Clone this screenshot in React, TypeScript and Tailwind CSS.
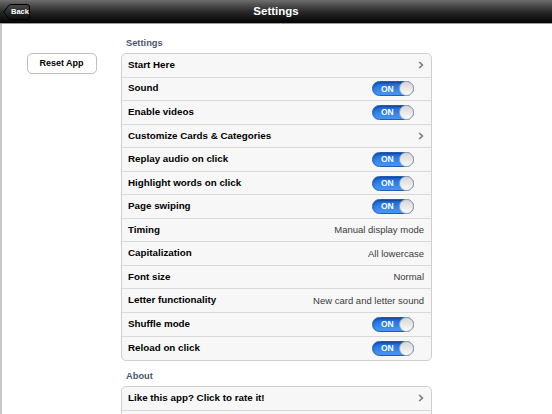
import React from 'react';

type Row =
  | { label: string; kind: 'link' }
  | { label: string; kind: 'toggle' }
  | { label: string; kind: 'value'; value: string };

const settingsRows: Row[] = [
  { label: 'Start Here', kind: 'link' },
  { label: 'Sound', kind: 'toggle' },
  { label: 'Enable videos', kind: 'toggle' },
  { label: 'Customize Cards & Categories', kind: 'link' },
  { label: 'Replay audio on click', kind: 'toggle' },
  { label: 'Highlight words on click', kind: 'toggle' },
  { label: 'Page swiping', kind: 'toggle' },
  { label: 'Timing', kind: 'value', value: 'Manual display mode' },
  { label: 'Capitalization', kind: 'value', value: 'All lowercase' },
  { label: 'Font size', kind: 'value', value: 'Normal' },
  { label: 'Letter functionality', kind: 'value', value: 'New card and letter sound' },
  { label: 'Shuffle mode', kind: 'toggle' },
  { label: 'Reload on click', kind: 'toggle' },
];

// second row sits below the fold; only its top edge shows
const aboutRows: Row[] = [
  { label: 'Like this app? Click to rate it!', kind: 'link' },
  { label: '', kind: 'link' },
];

function Chevron() {
  return (
    <svg width="6" height="8" viewBox="0 0 6 8" className="mr-[1px]">
      <path d="M1.2 1 L4.4 4 L1.2 7" fill="none" stroke="#7a7a7a" strokeWidth="1.6" />
    </svg>
  );
}

function Toggle() {
  return (
    <div className="relative mr-[11px] flex h-[15px] w-[42px] items-center rounded-full border border-[#1d5fb8] bg-gradient-to-b from-[#1b63d4] via-[#2f80ec] to-[#4b97f5] shadow-[inset_0_1px_2px_rgba(0,0,0,0.35)]">
      <span className="ml-[8px] text-[8.5px] font-bold leading-none text-white">ON</span>
      <div className="absolute right-[-1px] top-[-1px] h-[15px] w-[15px] rounded-full border border-[#a9a9a9] bg-gradient-to-b from-[#d6d6d6] to-[#fbfbfb]" />
    </div>
  );
}

function TableRow({ row }: { row: Row }) {
  return (
    <div className="flex h-[23.55px] items-center justify-between border-b border-[#d8d8d8] px-[6px] last:border-b-0">
      <span className="text-[9.8px] font-bold text-black">{row.label}</span>
      {row.kind === 'link' && row.label && <Chevron />}
      {row.kind === 'toggle' && <Toggle />}
      {row.kind === 'value' && <span className="pr-[1px] text-[9.5px] text-[#3a3a3a]">{row.value}</span>}
    </div>
  );
}

function Group({ title, rows }: { title: string; rows: Row[] }) {
  return (
    <div>
      <div className="px-[5px] pb-[4px] text-[9.3px] font-bold leading-[12px] text-[#4c566c]">{title}</div>
      <div className="overflow-hidden rounded-[5px] border border-[#cfcfcf] bg-[#f7f7f7]">
        {rows.map((r, i) => (
          <TableRow key={i} row={r} />
        ))}
      </div>
    </div>
  );
}

export default function App() {
  return (
    <div className="h-[414px] w-[552px] overflow-hidden bg-white font-['Liberation_Sans',Arial,sans-serif]">
      {/* navigation bar */}
      <div className="relative flex h-[24px] items-center justify-center border-b border-[#9a9a9a] bg-gradient-to-b from-[#6e6e6e] via-[#2a2a2a] to-[#050505]">
        <div className="absolute left-[3px] top-[4px] flex h-[16px] items-center">
          <svg width="27" height="16" viewBox="0 0 27 16" className="absolute left-0 top-0">
            <defs>
              <linearGradient id="backBg" x1="0" y1="0" x2="0" y2="1">
                <stop offset="0" stopColor="#4a4a4a" />
                <stop offset="1" stopColor="#0c0c0c" />
              </linearGradient>
            </defs>
            <path d="M0.6 8 L6 1.2 Q6.6 0.5 7.6 0.5 L24 0.5 Q26.5 0.5 26.5 3 L26.5 13 Q26.5 15.5 24 15.5 L7.6 15.5 Q6.6 15.5 6 14.8 Z" fill="url(#backBg)" stroke="#000" strokeWidth="1" />
          </svg>
          <span className="relative ml-[8px] text-[7.5px] font-bold text-white">Back</span>
        </div>
        <span className="text-[11.5px] font-bold text-white">Settings</span>
      </div>

      <div className="flex h-[390px] border-l-[2px] border-[#c8c8c8]">
        {/* side column */}
        <div className="flex w-[119px] justify-center pt-[29px]">
          <div className="flex h-[21px] w-[70px] items-center justify-center rounded-[5px] border border-[#bdbdbd] bg-white">
            <span className="text-[9px] font-bold text-black">Reset App</span>
          </div>
        </div>

        {/* settings tables */}
        <div className="flex w-[311px] flex-col gap-[9px] pt-[13px]">
          <Group title="Settings" rows={settingsRows} />
          <Group title="About" rows={aboutRows} />
        </div>
      </div>
    </div>
  );
}
